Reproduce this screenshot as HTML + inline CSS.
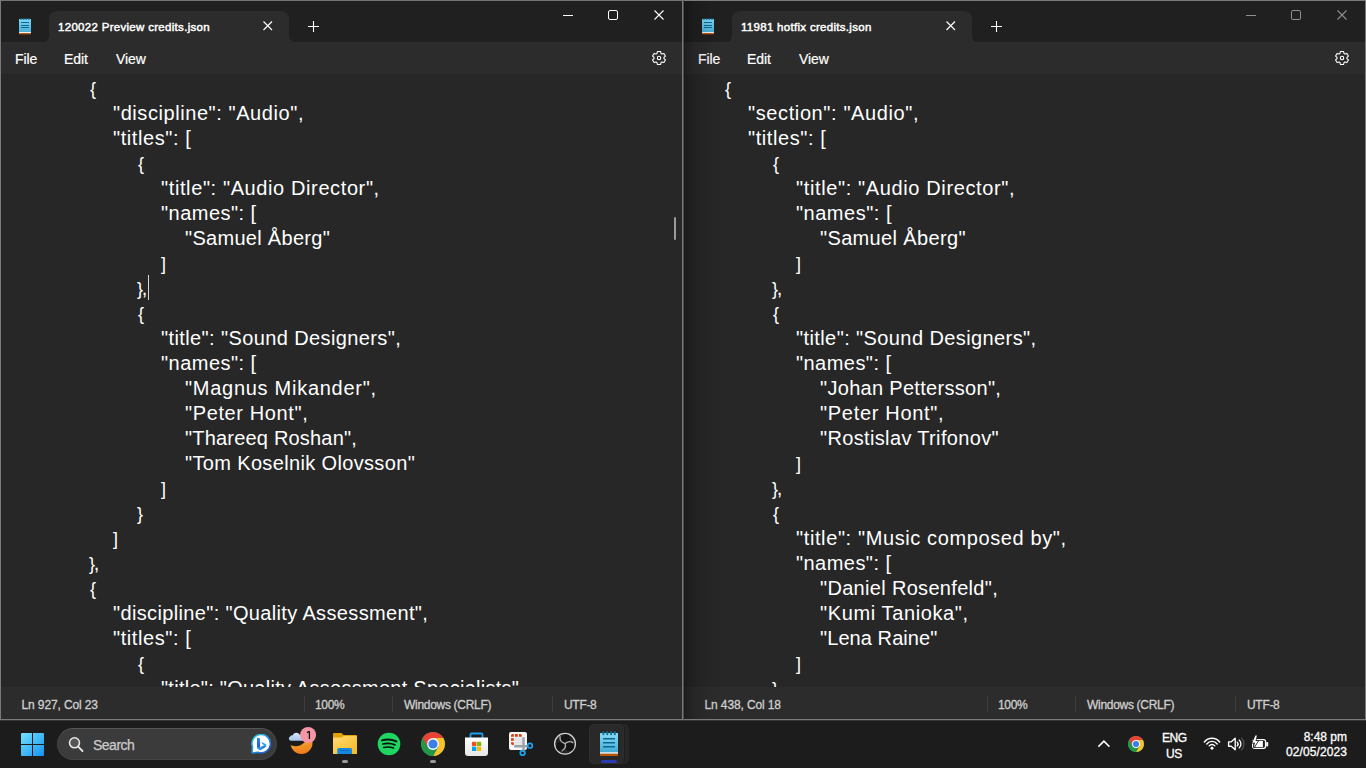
<!DOCTYPE html>
<html><head><meta charset="utf-8"><style>
*{margin:0;padding:0;box-sizing:border-box}
html,body{width:1366px;height:768px;overflow:hidden;background:#1c1c1c;font-family:"Liberation Sans",sans-serif}
body{position:relative}
.win{position:absolute;top:0;width:683px;height:720px;border:1px solid #7a7a7a;border-top-color:#747474;background:#272727;overflow:hidden}
.win.inactive{border-color:#7a7a7a;border-left-color:#4a4a4a}
.shadow{position:absolute;left:0;top:0;width:40px;height:718px;background:linear-gradient(to right,rgba(0,0,0,0.32),rgba(0,0,0,0.14) 25%,rgba(0,0,0,0.05) 60%,rgba(0,0,0,0))}
.titlebar{position:absolute;left:0;top:0;width:681px;height:41px;background:#202020}
.tab{position:absolute;left:48px;top:10px;width:240px;height:31px;background:#2c2c2c;border-radius:8px 8px 0 0}
.tab:before,.tab:after{content:"";position:absolute;bottom:0;width:5px;height:5px}
.tab:before{left:-5px;background:radial-gradient(circle at 0 0,transparent 4.5px,#2c2c2c 5px)}
.tab:after{right:-5px;background:radial-gradient(circle at 100% 0,transparent 4.5px,#2c2c2c 5px)}
.ttl{position:absolute;left:9px;top:9.5px;font-size:11.5px;color:#fff;letter-spacing:0.3px;-webkit-text-stroke:0.45px #fff;white-space:nowrap}
.tclose{position:absolute;left:213px;top:9px}
.plus{position:absolute;left:306px;top:19px}
.wc{stroke:#fff;stroke-width:1}
.inactive .wc{stroke:#8f8f8f}
.wmin{position:absolute;left:561px;top:13px}
.wmax{position:absolute;left:607px;top:9px}
.wclose{position:absolute;left:653px;top:9px}
.nicon{position:absolute;left:18px;top:17px}
.menubar{position:absolute;left:0;top:41px;width:681px;height:32px;background:#2c2c2c}
.menubar span{position:absolute;top:9px;font-size:14px;color:#fff;-webkit-text-stroke:0.2px #fff;letter-spacing:-0.1px}
.gear{position:absolute;left:650px;top:8px}
.editor{position:absolute;left:0;top:73px;width:681px;height:613px;background:#272727;overflow:hidden}
.ln{position:absolute;font-size:20px;letter-spacing:0.35px;line-height:25px;height:25px;color:#fff;white-space:pre}
.br{font-size:18px}
.caret{position:absolute;left:147px;top:201px;width:1px;height:25px;background:#d8d8d8}
.thumb{position:absolute;left:673px;top:143px;width:2px;height:23px;border-radius:1px;background:#9a9a9a}
.status{position:absolute;left:0;top:686px;width:681px;height:32px;background:#2c2c2c}
.status span{position:absolute;top:11px;font-size:12px;color:#cfcfcf;white-space:nowrap;letter-spacing:-0.3px;-webkit-text-stroke:0.3px #cfcfcf}
.sep{position:absolute;top:9px;width:1px;height:16px;background:#3d3d3d}
.taskbar{position:absolute;left:0;top:720px;width:1366px;height:48px;background:#1c1c1c;box-shadow:inset 0 1px 0 #363636}
.search{position:absolute;left:57px;top:8px;width:220px;height:32px;border-radius:16px;background:#3b3b3b;border:1px solid #444;border-top-color:#555}
.stxt{position:absolute;left:35px;top:8px;font-size:14px;color:#cccccc;letter-spacing:-0.5px;-webkit-text-stroke:0.25px #ccc}
.dot{position:absolute;top:40px;width:6px;height:3px;border-radius:2px;background:#9a9a9a}
.npbtn{position:absolute;left:589px;top:4px;width:35px;height:40px;border-radius:5px;background:#292929;box-shadow:1px 0 0 #1e1e1e,inset 0 0 0 1px #2e2e2e}
.npbtn2{position:absolute;left:594px;top:4px;width:35px;height:40px;border-radius:5px;background:#272727}
.active{position:absolute;top:40px;width:16px;height:3px;border-radius:2px;background:#2c3bb0}
.tray{position:absolute;font-size:12px;color:#fff;letter-spacing:-0.4px;-webkit-text-stroke:0.3px #fff}
.clock{position:absolute;right:19px;font-size:12px;color:#fff;text-align:right;-webkit-text-stroke:0.3px #fff}

</style></head>
<body>

<div class="win" style="left:0px">
  <div class="titlebar"></div>
  <svg class="nicon" width="13" height="17" viewBox="0 0 13 17"><defs><linearGradient id="nigw1" x1="0" y1="0" x2="0" y2="1"><stop offset="0" stop-color="#7fd6f4"/><stop offset="1" stop-color="#47aed8"/></linearGradient></defs>
   <rect x="0" y="1" width="12" height="14" fill="url(#nigw1)"/>
   <path d="M2 0.3V2M4.7 0.3V2M7.3 0.3V2M10 0.3V2" stroke="#1a7aa2" stroke-width="1.3"/>
   <path d="M2 4.5H10M2 7.5H10M2 9.5H10" stroke="#0c6a92" stroke-width="1"/>
   <rect x="0" y="14" width="12" height="1" fill="#eef2f4"/>
   <rect x="0" y="15" width="12" height="1.3" fill="#c0570f"/>
  </svg>
  <div class="tab"><span class="ttl">120022 Preview credits.json</span>
    <svg class="tclose" width="12" height="12" viewBox="0 0 12 12"><path d="M1.5 1.5L10 10M10 1.5L1.5 10" stroke="#fff" stroke-width="1.15"/></svg>
  </div>
  <svg class="plus" width="13" height="13" viewBox="0 0 13 13"><path d="M6.5 1V12M1 6.5H12" stroke="#fff" stroke-width="1.1"/></svg>
  <svg class="wmin" width="12" height="4" viewBox="0 0 12 4"><path d="M1 1.5H11" class="wc"/></svg>
  <svg class="wmax" width="12" height="12" viewBox="0 0 12 12"><rect x="0.5" y="0.5" width="9" height="9" rx="1.5" class="wc" fill="none"/></svg>
  <svg class="wclose" width="12" height="12" viewBox="0 0 12 12"><path d="M0.5 0.5L9.5 9.5M9.5 0.5L0.5 9.5" class="wc" style="stroke-width:1.1"/></svg>
  <div class="menubar"><span style="left:14px">File</span><span style="left:63px">Edit</span><span style="left:115px">View</span>
    <svg class="gear" width="16" height="16" viewBox="0 0 16 16"><circle cx="8" cy="8" r="1.7" fill="none" stroke="#fff" stroke-width="1.1"/><path d="M5.97 3.43L6.49 1.47L9.51 1.47L10.03 3.43L10.94 3.95L12.90 3.43L14.41 6.04L12.97 7.48L12.97 8.52L14.41 9.96L12.90 12.57L10.94 12.05L10.03 12.57L9.51 14.53L6.49 14.53L5.97 12.57L5.06 12.05L3.10 12.57L1.59 9.96L3.03 8.52L3.03 7.48L1.59 6.04L3.10 3.43L5.06 3.95Z" fill="none" stroke="#fff" stroke-width="1.1" stroke-linejoin="round"/></svg>
  </div>
  <div class="editor">
<div class="ln" style="top:2px;left:89px"><span class="br">{</span></div>
<div class="ln" style="top:27px;left:112px;letter-spacing:0.569px">&quot;discipline&quot;: &quot;Audio&quot;,</div>
<div class="ln" style="top:52px;left:112px;letter-spacing:0.570px">&quot;titles&quot;: [</div>
<div class="ln" style="top:77px;left:137px"><span class="br">{</span></div>
<div class="ln" style="top:102px;left:160px;letter-spacing:0.610px">&quot;title&quot;: &quot;Audio Director&quot;,</div>
<div class="ln" style="top:127px;left:160px;letter-spacing:0.472px">&quot;names&quot;: [</div>
<div class="ln" style="top:152px;left:184px;letter-spacing:0.296px">&quot;Samuel Åberg&quot;</div>
<div class="ln" style="top:177px;left:160px"><span class="br">]</span></div>
<div class="ln" style="top:202px;left:136px"><span class="br" style="letter-spacing:-1.3px">}</span>,</div>
<div class="ln" style="top:227px;left:137px"><span class="br">{</span></div>
<div class="ln" style="top:252px;left:160px;letter-spacing:0.392px">&quot;title&quot;: &quot;Sound Designers&quot;,</div>
<div class="ln" style="top:277px;left:160px;letter-spacing:0.472px">&quot;names&quot;: [</div>
<div class="ln" style="top:302px;left:184px;letter-spacing:0.726px">&quot;Magnus Mikander&quot;,</div>
<div class="ln" style="top:327px;left:184px;letter-spacing:0.617px">&quot;Peter Hont&quot;,</div>
<div class="ln" style="top:352px;left:184px;letter-spacing:0.194px">&quot;Thareeq Roshan&quot;,</div>
<div class="ln" style="top:377px;left:184px">&quot;Tom Koselnik Olovsson&quot;</div>
<div class="ln" style="top:402px;left:160px"><span class="br">]</span></div>
<div class="ln" style="top:427px;left:136px"><span class="br">}</span></div>
<div class="ln" style="top:452px;left:112px"><span class="br">]</span></div>
<div class="ln" style="top:477px;left:88px"><span class="br" style="letter-spacing:-1.3px">}</span>,</div>
<div class="ln" style="top:502px;left:89px"><span class="br">{</span></div>
<div class="ln" style="top:527px;left:112px">&quot;discipline&quot;: &quot;Quality Assessment&quot;,</div>
<div class="ln" style="top:552px;left:112px;letter-spacing:0.570px">&quot;titles&quot;: [</div>
<div class="ln" style="top:577px;left:137px"><span class="br">{</span></div>
<div class="ln" style="top:602px;left:160px;letter-spacing:0.262px">&quot;title&quot;: &quot;Quality Assessment Specialists&quot;</div>
<div class="caret"></div><div class="thumb"></div>
  </div>
  <div class="status">
    <span style="left:20.5px;letter-spacing:-0.12px">Ln 927, Col 23</span>
    <i class="sep" style="left:303px"></i><span style="left:314px">100%</span>
    <i class="sep" style="left:391px"></i><span style="left:403px">Windows (CRLF)</span>
    <i class="sep" style="left:551px"></i><span style="left:563px">UTF-8</span>
  </div>
  
</div>

<div class="win inactive" style="left:683px">
  <div class="titlebar"></div>
  <svg class="nicon" width="13" height="17" viewBox="0 0 13 17"><defs><linearGradient id="nigw2" x1="0" y1="0" x2="0" y2="1"><stop offset="0" stop-color="#7fd6f4"/><stop offset="1" stop-color="#47aed8"/></linearGradient></defs>
   <rect x="0" y="1" width="12" height="14" fill="url(#nigw2)"/>
   <path d="M2 0.3V2M4.7 0.3V2M7.3 0.3V2M10 0.3V2" stroke="#1a7aa2" stroke-width="1.3"/>
   <path d="M2 4.5H10M2 7.5H10M2 9.5H10" stroke="#0c6a92" stroke-width="1"/>
   <rect x="0" y="14" width="12" height="1" fill="#eef2f4"/>
   <rect x="0" y="15" width="12" height="1.3" fill="#c0570f"/>
  </svg>
  <div class="tab"><span class="ttl">11981 hotfix credits.json</span>
    <svg class="tclose" width="12" height="12" viewBox="0 0 12 12"><path d="M1.5 1.5L10 10M10 1.5L1.5 10" stroke="#fff" stroke-width="1.15"/></svg>
  </div>
  <svg class="plus" width="13" height="13" viewBox="0 0 13 13"><path d="M6.5 1V12M1 6.5H12" stroke="#fff" stroke-width="1.1"/></svg>
  <svg class="wmin" width="12" height="4" viewBox="0 0 12 4"><path d="M1 1.5H11" class="wc"/></svg>
  <svg class="wmax" width="12" height="12" viewBox="0 0 12 12"><rect x="0.5" y="0.5" width="9" height="9" rx="1.5" class="wc" fill="none"/></svg>
  <svg class="wclose" width="12" height="12" viewBox="0 0 12 12"><path d="M0.5 0.5L9.5 9.5M9.5 0.5L0.5 9.5" class="wc" style="stroke-width:1.1"/></svg>
  <div class="menubar"><span style="left:14px">File</span><span style="left:63px">Edit</span><span style="left:115px">View</span>
    <svg class="gear" width="16" height="16" viewBox="0 0 16 16"><circle cx="8" cy="8" r="1.7" fill="none" stroke="#fff" stroke-width="1.1"/><path d="M5.97 3.43L6.49 1.47L9.51 1.47L10.03 3.43L10.94 3.95L12.90 3.43L14.41 6.04L12.97 7.48L12.97 8.52L14.41 9.96L12.90 12.57L10.94 12.05L10.03 12.57L9.51 14.53L6.49 14.53L5.97 12.57L5.06 12.05L3.10 12.57L1.59 9.96L3.03 8.52L3.03 7.48L1.59 6.04L3.10 3.43L5.06 3.95Z" fill="none" stroke="#fff" stroke-width="1.1" stroke-linejoin="round"/></svg>
  </div>
  <div class="editor">
<div class="ln" style="top:2px;left:41px"><span class="br">{</span></div>
<div class="ln" style="top:27px;left:64px;letter-spacing:0.611px">&quot;section&quot;: &quot;Audio&quot;,</div>
<div class="ln" style="top:52px;left:64px;letter-spacing:0.570px">&quot;titles&quot;: [</div>
<div class="ln" style="top:77px;left:89px"><span class="br">{</span></div>
<div class="ln" style="top:102px;left:112px;letter-spacing:0.626px">&quot;title&quot;: &quot;Audio Director&quot;,</div>
<div class="ln" style="top:127px;left:112px;letter-spacing:0.506px">&quot;names&quot;: [</div>
<div class="ln" style="top:152px;left:136px">&quot;Samuel Åberg&quot;</div>
<div class="ln" style="top:177px;left:112px"><span class="br">]</span></div>
<div class="ln" style="top:202px;left:88px"><span class="br" style="letter-spacing:-1.3px">}</span>,</div>
<div class="ln" style="top:227px;left:89px"><span class="br">{</span></div>
<div class="ln" style="top:252px;left:112px;letter-spacing:0.404px">&quot;title&quot;: &quot;Sound Designers&quot;,</div>
<div class="ln" style="top:277px;left:112px;letter-spacing:0.450px">&quot;names&quot;: [</div>
<div class="ln" style="top:302px;left:136px;letter-spacing:0.306px">&quot;Johan Pettersson&quot;,</div>
<div class="ln" style="top:327px;left:136px;letter-spacing:0.692px">&quot;Peter Hont&quot;,</div>
<div class="ln" style="top:352px;left:136px">&quot;Rostislav Trifonov&quot;</div>
<div class="ln" style="top:377px;left:112px"><span class="br">]</span></div>
<div class="ln" style="top:402px;left:88px"><span class="br" style="letter-spacing:-1.3px">}</span>,</div>
<div class="ln" style="top:427px;left:89px"><span class="br">{</span></div>
<div class="ln" style="top:452px;left:112px;letter-spacing:0.611px">&quot;title&quot;: &quot;Music composed by&quot;,</div>
<div class="ln" style="top:477px;left:112px;letter-spacing:0.450px">&quot;names&quot;: [</div>
<div class="ln" style="top:502px;left:136px;letter-spacing:0.317px">&quot;Daniel Rosenfeld&quot;,</div>
<div class="ln" style="top:527px;left:136px;letter-spacing:0.614px">&quot;Kumi Tanioka&quot;,</div>
<div class="ln" style="top:552px;left:136px;letter-spacing:0.077px">&quot;Lena Raine&quot;</div>
<div class="ln" style="top:577px;left:112px"><span class="br">]</span></div>
<div class="ln" style="top:602px;left:88px"><span class="br" style="letter-spacing:-1.3px">}</span>,</div>

  </div>
  <div class="status">
    <span style="left:20.5px;letter-spacing:-0.12px">Ln 438, Col 18</span>
    <i class="sep" style="left:303px"></i><span style="left:314px">100%</span>
    <i class="sep" style="left:391px"></i><span style="left:403px">Windows (CRLF)</span>
    <i class="sep" style="left:551px"></i><span style="left:563px">UTF-8</span>
  </div>
  <div class="shadow"></div>
</div>

<div class="taskbar">
 <svg style="position:absolute;left:21px;top:13px" width="23" height="23" viewBox="0 0 23 23">
  <defs><linearGradient id="wg" x1="0" y1="0" x2="1" y2="1"><stop offset="0" stop-color="#74e2fb"/><stop offset="1" stop-color="#1493f3"/></linearGradient></defs>
  <path d="M1 0H11V11H0V1A1 1 0 0 1 1 0Z M12 0H22A1 1 0 0 1 23 1V11H12Z M0 12H11V23H1A1 1 0 0 1 0 22Z M12 12H23V22A1 1 0 0 1 22 23H12Z" fill="url(#wg)"/>
 </svg>
 <div class="search"><svg style="position:absolute;left:9px;top:7px" width="18" height="18" viewBox="0 0 18 18"><circle cx="7.5" cy="6.8" r="5" fill="#555" stroke="#e6e6e6" stroke-width="1.6"/><path d="M11.2 10.6L15.5 15" stroke="#e6e6e6" stroke-width="1.8" stroke-linecap="round"/></svg>
  <span class="stxt">Search</span>
  <svg style="position:absolute;left:192px;top:5px" width="22" height="22" viewBox="0 0 22 22">
   <defs><linearGradient id="bg1" x1="0" y1="0" x2="1" y2="1"><stop offset="0" stop-color="#2ad4f4"/><stop offset="1" stop-color="#1a4ed8"/></linearGradient>
   <linearGradient id="bg2" x1="0" y1="0" x2="0" y2="1"><stop offset="0" stop-color="#2f8cf0"/><stop offset="1" stop-color="#1f4fd8"/></linearGradient>
   <linearGradient id="bg3" x1="1" y1="0" x2="0" y2="1"><stop offset="0" stop-color="#27d0dc"/><stop offset="0.5" stop-color="#2a78ea"/><stop offset="1" stop-color="#33b6ee"/></linearGradient></defs>
   <path d="M2.55 12.75A9.2 9.2 0 1 1 8.05 18.25L2.6 18.9Q2.1 18.9 2.1 18.4Z" fill="#fff" stroke="url(#bg1)" stroke-width="1.5" stroke-linejoin="round"/>
   <path d="M7 3.6L10.1 4.6V14.6L7 12.8Z" fill="url(#bg2)"/>
   <path d="M10.1 13.4L14.3 11.1L12.4 10.2L11.3 7.9L16.3 10.3V12.8L10.1 16.4L7 14.4V12.8Z" fill="url(#bg3)"/>
  </svg>
 </div>
 <svg style="position:absolute;left:287px;top:7px" width="30" height="30" viewBox="0 0 30 30">
  <defs><linearGradient id="mg" x1="0.3" y1="0" x2="0.5" y2="1"><stop offset="0" stop-color="#f8c43a"/><stop offset="1" stop-color="#ee7a1b"/></linearGradient>
  <linearGradient id="cg" x1="0" y1="0" x2="0" y2="1"><stop offset="0" stop-color="#d8e6f8"/><stop offset="1" stop-color="#a6c2ec"/></linearGradient>
  <mask id="mm"><rect width="30" height="30" fill="#fff"/><circle cx="8.5" cy="6.6" r="12.6" fill="#000"/></mask></defs>
  <circle cx="14.5" cy="16" r="11" fill="url(#mg)" mask="url(#mm)"/>
  <path d="M4 13.8A2.3 2.3 0 0 1 3.2 9.4A2.6 2.6 0 0 1 5.6 8.4A3.9 3.9 0 0 1 12.8 7.8A3 3 0 0 1 16 13.8Z" fill="url(#cg)"/>
  <circle cx="21.1" cy="8" r="8" fill="#f595a5"/>
  <path d="M22.4 4.2V12M22.4 4.2L20 5.6" stroke="#111" stroke-width="1.3" fill="none"/>
 </svg>
 <svg style="position:absolute;left:333px;top:13px" width="24" height="21" viewBox="0 0 24 21">
  <defs><linearGradient id="fg" x1="0" y1="0" x2="1" y2="1"><stop offset="0" stop-color="#ffdc78"/><stop offset="1" stop-color="#f5b71c"/></linearGradient></defs>
  <path d="M0 1A1 1 0 0 1 1 0H8.5L10.5 2H23A1 1 0 0 1 24 3V21H0Z" fill="#e0a208"/>
  <path d="M0 4.6H8.8L10.8 3H23A1 1 0 0 1 24 4V21H0Z" fill="url(#fg)"/>
  <path d="M4.3 21V16.6A1.6 1.6 0 0 1 5.9 15H17.4A1.6 1.6 0 0 1 19 16.6V21Z" fill="#1787de"/>
  <rect x="7.5" y="17" width="8" height="0.9" fill="#0f6ac0"/>
 </svg>
 <i class="dot" style="left:342px"></i>
 <svg style="position:absolute;left:377px;top:12px" width="24" height="24" viewBox="0 0 24 24">
  <circle cx="12" cy="12" r="11.3" fill="#1ed760"/>
  <path d="M5 8.4C9.5 7.2 15 7.4 19.4 9.4" stroke="#111" stroke-width="2" stroke-linecap="round" fill="none"/><path d="M5.8 12C9.8 11 14.2 11.2 17.9 12.8" stroke="#111" stroke-width="1.8" stroke-linecap="round" fill="none"/><path d="M6.6 15.4C10 14.6 13.6 14.8 16.6 16" stroke="#111" stroke-width="1.5" stroke-linecap="round" fill="none"/>
 </svg>
 <svg style="position:absolute;left:421px;top:12px" width="24" height="24" viewBox="-1 -1 2 2">
  <circle r="1" fill="#1f9d48"/>
  <path d="M-0.866 -0.5A1 1 0 0 1 0.866 -0.5L0 -0.5L-0.433 0.25Z" fill="#ea4335"/>
  <path d="M0.866 -0.5A1 1 0 0 1 0 1L0.433 0.25L0 -0.5Z" fill="#fbc02d"/>
  <path d="M0 1A1 1 0 0 1 -0.866 -0.5L-0.433 0.25L0.433 0.25Z" fill="#23964a"/>
  <circle r="0.49" fill="#fff"/>
  <circle r="0.385" fill="#3b7fea"/>
 </svg>
 <i class="dot" style="left:430px"></i>
 <svg style="position:absolute;left:464px;top:12px" width="25" height="25" viewBox="0 0 25 25">
  <defs><linearGradient id="sg" x1="0" y1="0" x2="0" y2="1"><stop offset="0" stop-color="#ffffff"/><stop offset="1" stop-color="#e6e6e6"/></linearGradient></defs>
  <path d="M6.5 6V2.5A1 1 0 0 1 7.5 1.5H17.5A1 1 0 0 1 18.5 2.5V6" stroke="#1aa0f0" stroke-width="1.8" fill="none"/>
  <path d="M1 5.5H24V21A3 3 0 0 1 21 24H4A3 3 0 0 1 1 21Z" fill="url(#sg)"/>
  <rect x="8" y="9.8" width="4.3" height="4.3" fill="#f25022"/><rect x="12.9" y="9.8" width="4.3" height="4.3" fill="#7fba00"/>
  <rect x="8" y="14.7" width="4.3" height="4.3" fill="#00a4ef"/><rect x="12.9" y="14.7" width="4.3" height="4.3" fill="#ffb900"/>
 </svg>
 <svg style="position:absolute;left:508px;top:11px" width="27" height="27" viewBox="0 0 27 27">
  <rect x="1" y="1" width="18" height="18" rx="2" fill="#f6f6f6"/>
  <rect x="6.5" y="6.5" width="8" height="8" fill="#e4e6ea"/>
  <g fill="#e03c0e"><path d="M3 5.8V4.6A1.6 1.6 0 0 1 4.6 3H5.8V5.8Z"/><rect x="7" y="3" width="2.8" height="2.8"/><path d="M11 3H12.3A1.6 1.6 0 0 1 13.9 4.6V5.8H11Z"/>
  <rect x="3" y="7.2" width="2.8" height="2.6"/><path d="M3 11.2H5.8V13.9H4.6A1.6 1.6 0 0 1 3 12.3Z"/></g>
  <path d="M15.5 7.2V20M7.2 15.3H19" stroke="#9ea3a9" stroke-width="2.5" stroke-linecap="round"/>
  <circle cx="22" cy="14.7" r="2.3" fill="none" stroke="#1aa3f2" stroke-width="1.7"/>
  <circle cx="14.6" cy="21.9" r="2.3" fill="none" stroke="#1aa3f2" stroke-width="1.7"/>
 </svg>
 <svg style="position:absolute;left:553px;top:12px" width="24" height="24" viewBox="0 0 24 24">
  <circle cx="12" cy="11.8" r="10.4" fill="#262626" stroke="#d2d2d2" stroke-width="1.3"/>
  <circle cx="12.6" cy="6.8" r="4.6" fill="#141414"/><circle cx="16.6" cy="14.6" r="4.6" fill="#141414"/><circle cx="7.6" cy="14.6" r="4.6" fill="#141414"/>
  <path d="M7 4.6Q6.4 9.8 12 11.6Q16.4 8.4 19.8 10.6M12 11.6Q13.8 16 9 18.8" stroke="#b0b0b0" stroke-width="1.3" fill="none" stroke-linecap="round"/>
 </svg>
 <div class="npbtn2"></div><div class="npbtn"></div>
 <svg style="position:absolute;left:600px;top:11px" width="19" height="26" viewBox="0 0 19 26">
  <defs><linearGradient id="ng" x1="0" y1="0" x2="0" y2="1"><stop offset="0" stop-color="#8cdcf6"/><stop offset="1" stop-color="#3ba6d2"/></linearGradient></defs>
  <rect x="0" y="2" width="18" height="21" rx="0.6" fill="url(#ng)"/>
  <path d="M3.4 1.3V3.3M7.3 1.3V3.3M11.1 1.3V3.3M14.8 1.3V3.3" stroke="#0f7298" stroke-width="2" stroke-linecap="round"/>
  <path d="M3 7.8H15M3 11.8H15M3 15.8H15" stroke="#0a6890" stroke-width="1.6"/>
  <rect x="0" y="21.2" width="18" height="1.6" fill="#f2eee8"/>
  <rect x="0" y="22.8" width="18" height="2.2" rx="0.5" fill="#b9540c"/>
 </svg>
 <i class="active" style="left:601px"></i>
 <svg style="position:absolute;left:1097px;top:18px" width="14" height="11" viewBox="0 0 14 11"><path d="M1.4 8.6L6.9 3.1L12.4 8.6" stroke="#fff" stroke-width="1.5" fill="none"/></svg>
 <svg style="position:absolute;left:1128px;top:16px" width="16" height="16" viewBox="-1 -1 2 2">
  <circle r="1" fill="#1f9d48"/>
  <path d="M-0.866 -0.5A1 1 0 0 1 0.866 -0.5L0 -0.5L-0.433 0.25Z" fill="#ea4335"/>
  <path d="M0.866 -0.5A1 1 0 0 1 0 1L0.433 0.25L0 -0.5Z" fill="#fbc02d"/>
  <path d="M0 1A1 1 0 0 1 -0.866 -0.5L-0.433 0.25L0.433 0.25Z" fill="#23964a"/>
  <circle r="0.49" fill="#fff"/>
  <circle r="0.385" fill="#3b7fea"/>
 </svg>
 <span class="tray" style="left:1162px;top:11px">ENG</span>
 <span class="tray" style="left:1166px;top:27px">US</span>
 <svg style="position:absolute;left:1203px;top:16.6px" width="18" height="14" viewBox="0 0 18 14">
  <path d="M1.36 5.03A9.7 9.7 0 0 1 16.64 5.03M3.8 6.93A6.6 6.6 0 0 1 14.2 6.93M6.24 8.84A3.5 3.5 0 0 1 11.76 8.84" stroke="#fff" stroke-width="1.45" fill="none" stroke-linecap="round"/>
  <circle cx="9" cy="11.2" r="1.45" fill="#fff"/>
 </svg>
 <svg style="position:absolute;left:1227px;top:17px" width="18" height="15" viewBox="0 0 18 15">
  <path d="M1.6 4.8H4.3L8.2 1.3V12.7L4.3 9.2H1.6Z" stroke="#fff" stroke-width="1.35" fill="none" stroke-linejoin="round"/>
  <path d="M10.2 5.1A2.7 2.7 0 0 1 10.2 8.9M12.2 3.1A5.3 5.3 0 0 1 12.2 10.9" stroke="#fff" stroke-width="1.35" fill="none" stroke-linecap="round"/>
  <path d="M14.6 1.2A8.2 8.2 0 0 1 14.6 12.8" stroke="#555" stroke-width="1.2" fill="none" stroke-linecap="round"/>
 </svg>
 <svg style="position:absolute;left:1251px;top:15px" width="18" height="15" viewBox="0 0 18 15">
  <rect x="1.65" y="4.55" width="12.9" height="8.75" rx="2" stroke="#fff" stroke-width="1.3" fill="none"/>
  <rect x="15.2" y="7" width="2" height="4.5" rx="0.8" fill="#fff"/>
  <path d="M4.2 12V10.4L7.4 6.1H11.9V12Z" fill="#fff"/>
  <path d="M4.4 0.6L1.3 7.8H4L2.7 12.8L7 6H4.5L5.9 0.6Z" fill="#fff" stroke="#1c1c1c" stroke-width="1.4" paint-order="stroke"/>
 </svg>
 <span class="clock" style="top:10px">8:48 pm</span>
 <span class="clock" style="top:24.5px;letter-spacing:0.1px">02/05/2023</span>
</div>

</body></html>
